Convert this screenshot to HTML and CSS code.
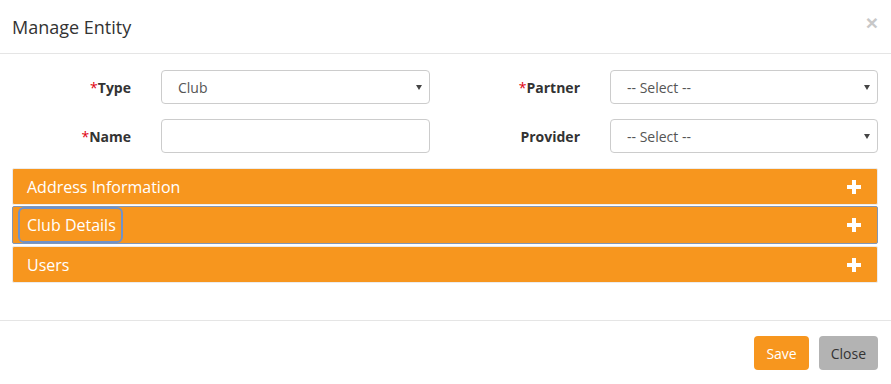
FILE: index.html
```html
<!DOCTYPE html>
<html lang="en">

<head>
    <meta charset="utf-8">
    <meta name="viewport" content="width=device-width, initial-scale=1.0">
    <title>Manage Entity</title>
    <link rel="stylesheet" href="styles.css">
</head>

<body>
    <section class="modal">
        <header class="modal-header">
            <h4 class="modal-title">Manage Entity</h4>
            <button class="close" type="button">&times;</button>
        </header>

        <div class="modal-body">
            <form class="entity-form">
                <label class="lbl"><span class="req">*</span>Type</label>
                <div class="select-wrap">
                    <select class="ctrl">
                        <option>Club</option>
                    </select>
                </div>
                <label class="lbl"><span class="req">*</span>Partner</label>
                <div class="select-wrap">
                    <select class="ctrl">
                        <option>-- Select --</option>
                    </select>
                </div>

                <label class="lbl"><span class="req">*</span>Name</label>
                <input class="ctrl" type="text">
                <label class="lbl">Provider</label>
                <div class="select-wrap">
                    <select class="ctrl">
                        <option>-- Select --</option>
                    </select>
                </div>
            </form>

            <div class="panels">
                <div class="panel">
                    <span class="panel-title">Address Information</span>
                    <svg class="plus" width="14" height="14" viewBox="0 0 14 14"><path d="M5 0h4v5h5v4H9v5H5V9H0V5h5z" fill="#fff"/></svg>
                </div>
                <div class="panel active">
                    <span class="panel-title focus">Club Details</span>
                    <svg class="plus" width="14" height="14" viewBox="0 0 14 14"><path d="M5 0h4v5h5v4H9v5H5V9H0V5h5z" fill="#fff"/></svg>
                </div>
                <div class="panel">
                    <span class="panel-title">Users</span>
                    <svg class="plus" width="14" height="14" viewBox="0 0 14 14"><path d="M5 0h4v5h5v4H9v5H5V9H0V5h5z" fill="#fff"/></svg>
                </div>
            </div>
        </div>

        <footer class="modal-footer">
            <button class="btn btn-save" type="button">Save</button>
            <button class="btn btn-close" type="button">Close</button>
        </footer>
    </section>
</body>

</html>
```

FILE: styles.css
```css
body {
    margin: 0;
    background-color: white;
    font-family: "Open Sans", "Liberation Sans", sans-serif;
    font-size: 14px;
    color: #333;
}

.modal {
    width: 891px;
}

/*********** header ***********/
.modal-header {
    display: flex;
    align-items: center;
    justify-content: space-between;
    height: 54px;
    padding: 0 13px 0 12px;
    border-bottom: 1px solid #e5e5e5;
    box-sizing: border-box;
}

.modal-title {
    margin: 0;
    font-size: 18px;
    font-weight: normal;
    color: #333;
}

.close {
    border: 0;
    background: none;
    padding: 0;
    margin-top: -9px;
    font-size: 21px;
    font-weight: bold;
    line-height: 1;
    color: #c8c8c8;
    font-family: "Liberation Sans", sans-serif;
}

/*********** form ***********/
.modal-body {
    padding: 16px 13px 37px 12px;
}

.entity-form {
    display: grid;
    grid-template-columns: 134px 269px 150px 268px;
    column-gap: 15px;
    row-gap: 15px;
    align-items: center;
    margin-bottom: 15px;
}

.lbl {
    text-align: right;
    padding-right: 15px;
    font-weight: bold;
    color: #333;
}

.req {
    color: #e0000f;
    font-weight: normal;
}

.ctrl {
    display: block;
    width: 100%;
    height: 34px;
    box-sizing: border-box;
    border: 1px solid #ccc;
    border-radius: 4px;
    padding: 0 16px;
    background-color: white;
    font-family: "Open Sans", "Liberation Sans", sans-serif;
    font-size: 14px;
    color: #555;
    appearance: none;
    -webkit-appearance: none;
}

.select-wrap {
    position: relative;
}

.select-wrap::after {
    content: "";
    position: absolute;
    right: 8px;
    top: 15px;
    border-left: 3px solid transparent;
    border-right: 3px solid transparent;
    border-top: 5px solid #444;
}

/*********** panels ***********/
.panels {
    display: flex;
    flex-direction: column;
}

.panel {
    display: flex;
    align-items: center;
    justify-content: space-between;
    height: 37px;
    box-sizing: border-box;
    margin-bottom: 1px;
    padding: 0 16px 0 14px;
    background-color: #f7961e;
    border: 1px solid #ececec;
    border-radius: 2px;
    color: white;
    font-size: 16px;
}

.panel:last-child {
    margin-bottom: 0;
}

.panel.active {
    height: 38px;
    margin-bottom: 2px;
    border-color: #8196b5;
}

.panel-title {
    line-height: 22px;
}

.panel-title.focus {
    border: 2px solid #6f92c9;
    border-radius: 6px;
    padding: 5px 5px 5px 7px;
    margin-left: -9px;
}

/*********** footer ***********/
.modal-footer {
    display: flex;
    justify-content: flex-end;
    gap: 10px;
    padding: 15px 13px 15px 12px;
    border-top: 1px solid #e5e5e5;
}

.btn {
    height: 34px;
    border: 0;
    border-radius: 4px;
    padding: 0 12px;
    font-family: "Open Sans", "Liberation Sans", sans-serif;
    font-size: 14px;
}

.btn-save {
    background-color: #f7961e;
    color: white;
}

.btn-close {
    background-color: #b3b3b3;
    color: #333;
}
```
